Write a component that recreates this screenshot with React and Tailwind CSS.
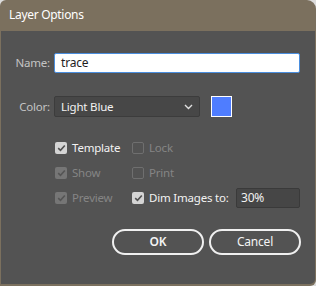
import React from "react";

function Check({ checked, disabled }) {
  if (!checked) {
    return <span className="w-[12px] h-[12px] rounded-[2px] border border-[#6f6f6f] shrink-0" />;
  }
  return (
    <span
      className={`w-[12px] h-[12px] rounded-[2px] shrink-0 flex items-center justify-center ${
        disabled ? "bg-[#767676]" : "bg-[#d4d4d4]"
      }`}
    >
      <svg width="9" height="8" viewBox="0 0 9 8">
        <path
          d="M1.2 4.2 L3.5 6.3 L7.8 1.5"
          fill="none"
          stroke={disabled ? "#555555" : "#505050"}
          strokeWidth="1.6"
        />
      </svg>
    </span>
  );
}

function Option({ label, checked, disabled, width }) {
  return (
    <label className={`flex items-center gap-[5px] ${width}`}>
      <Check checked={checked} disabled={disabled} />
      <span className={disabled ? "text-[#858585]" : "text-[#f2f2f2]"}>{label}</span>
    </label>
  );
}

export default function App() {
  return (
    <div className="w-[316px] h-[286px] bg-[#dcdcdc]" style={{ fontFamily: '"Noto Sans", sans-serif' }}>
      <div className="w-full h-full bg-[#7b705e] rounded-tl-[6px] rounded-tr-[9px] rounded-br-[6px] flex flex-col">
        <div className="h-[31px] flex items-center pl-[9px] text-[12px] tracking-[-0.3px] text-white pb-[1px]">Layer Options</div>
        <div className="flex-1 mx-[1px] mb-[2px] bg-[#535353] rounded-br-[5px] text-[11.5px] tracking-[-0.2px] leading-none">
          <div className="flex items-center gap-[4px] mt-[22px]">
            <span className="w-[49px] text-right text-[#c4c4c4]">Name:</span>
            <div className="w-[246px] h-[20px] bg-white border border-[#4a8ede] rounded-[2px] flex items-center pl-[6px] text-[#1e1e1e] text-[12px]">
              trace
            </div>
          </div>
          <div className="flex items-center gap-[4px] mt-[23px]">
            <span className="w-[49px] text-right text-[#c4c4c4]">Color:</span>
            <div className="w-[146px] h-[21px] bg-[#474747] border border-[#3c3c3c] rounded-[2px] flex items-center justify-between pl-[6px] pr-[6px] text-[#f2f2f2]">
              <span>Light Blue</span>
              <svg width="9" height="6" viewBox="0 0 9 6">
                <path d="M1 1 L4.5 4.5 L8 1" fill="none" stroke="#e0e0e0" strokeWidth="1.4" />
              </svg>
            </div>
            <div className="ml-[7px] w-[21px] h-[21px] bg-[#4f7dff] border border-white" />
          </div>
          <div className="ml-[54px] mt-[24px] flex flex-col gap-[12px]">
            <div className="flex items-center h-[13px]">
              <Option label="Template" checked width="w-[77px]" />
              <Option label="Lock" disabled />
            </div>
            <div className="flex items-center h-[13px]">
              <Option label="Show" checked disabled width="w-[77px]" />
              <Option label="Print" disabled />
            </div>
            <div className="flex items-center h-[13px]">
              <Option label="Preview" checked disabled width="w-[77px]" />
              <Option label="Dim Images to:" checked />
              <div className="ml-auto mr-[15px] w-[64px] h-[20px] bg-[#464646] border border-[#3a3a3a] rounded-[2px] flex items-center pl-[4px] text-[#f2f2f2] text-[12px]">
                30%
              </div>
            </div>
          </div>
          <div className="flex justify-end gap-[5px] mr-[14px] mt-[25px]">
            <button className="w-[92px] h-[26px] rounded-full border-2 border-[#f0f0f0] text-[#f4f4f4] font-semibold text-[12px]">
              OK
            </button>
            <button className="w-[92px] h-[26px] rounded-full border-2 border-[#f0f0f0] text-[#f4f4f4] text-[12px]">
              Cancel
            </button>
          </div>
        </div>
      </div>
    </div>
  );
}
